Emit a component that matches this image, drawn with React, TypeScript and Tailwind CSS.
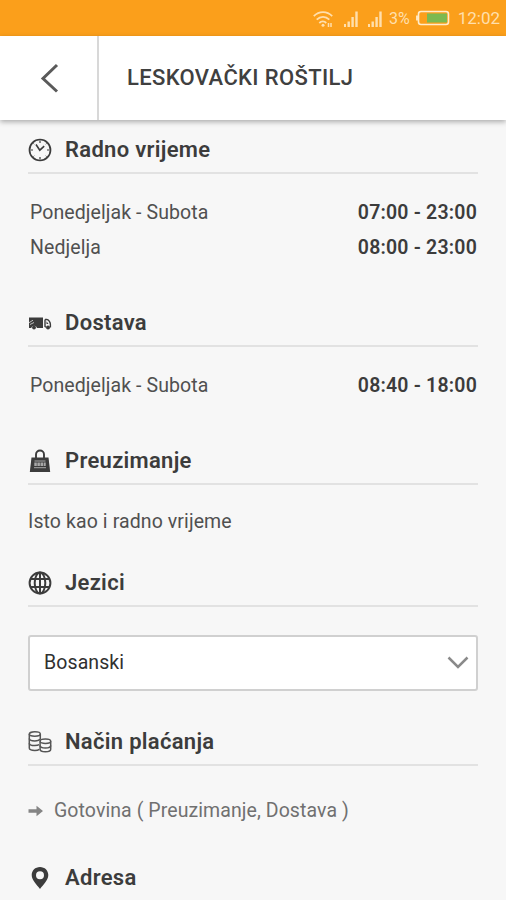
import React from 'react';

interface SectionProps {
  icon: React.ReactNode;
  title: string;
  children?: React.ReactNode;
}

interface HoursRowProps {
  days: string;
  hours: string;
}

const SignalIcon: React.FC = () => (
  <svg className="h-[18px] w-4" viewBox="0 0 16 18" fill="currentColor">
    <path d="M1 14h2v3H1zM4.500 11.500h2.400V17H4.500zM8.400 7h2.400v10H8.400zM12.300 1.500h2.400V17h-2.400z" />
  </svg>
);

const WifiIcon: React.FC = () => (
  <svg className="h-[18px] w-5" viewBox="0 0 20 18" fill="none" stroke="currentColor" strokeWidth="1.800">
    <path d="M.8 6.200C6 .8 14 .8 19.200 6.200M3.700 9.700c3.700-3.700 8.900-3.700 12.600 0M6.300 13c2-2 5-2 7 0" />
    <circle cx="10" cy="15.300" r="1.500" fill="currentColor" stroke="none" />
    <path d="M15.500 13v4M18 13v4" strokeWidth="1.500" />
  </svg>
);

const BatteryIcon: React.FC = () => (
  <svg className="h-4 w-[34px]" viewBox="0 0 34 16">
    <rect x="2.500" y="1.500" width="30" height="13" rx="2.500" fill="none" stroke="#ffeccb" strokeWidth="1.600" />
    <path d="M1 5.500v5" stroke="#ffeccb" strokeWidth="1.800" />
    <rect x="11" y="3.500" width="20" height="9" fill="#7cb950" />
  </svg>
);

const ClockIcon: React.FC = () => (
  <svg className="size-6" viewBox="0 0 24 24" fill="none" stroke="currentColor">
    <circle cx="12" cy="12" r="10.500" strokeWidth="1.700" />
    <path d="M8 6.500l3.800 5.700 4.400-4" strokeWidth="1.600" />
    <path d="M12 2.500v2.500M12 19v2.500M2.500 12H5M19 12h2.500" strokeWidth="1.200" />
    <path d="M5.300 5.300l1 1M17.700 17.700l1 1M5.300 18.700l1-1M18.700 5.300l-1 1" strokeWidth=".8" />
  </svg>
);

const TruckIcon: React.FC = () => (
  <svg className="size-6" viewBox="0 0 24 24" fill="currentColor">
    <path d="M1 6.500h14V17H9a3 3 0 0 0-5.800 0H1z" />
    <path d="M1 11.700l4-2.500M2 13.500l4-2" stroke="#f7f7f7" strokeWidth=".7" />
    <circle cx="6" cy="16.500" r="1.900" />
    <path d="M17 8.500h1.800c1.700 0 3.600 2.700 3.600 5v3M17 8.500v7l1 .8" fill="none" stroke="currentColor" strokeWidth="1.400" />
    <path d="M18.500 10.200l2 2.700h-2z" />
    <circle cx="20" cy="16.400" r="2" />
  </svg>
);

const BagIcon: React.FC = () => (
  <svg className="size-6" viewBox="0 0 24 24" fill="currentColor">
    <path d="M3.500 8.500h17l1.700 14.500H1.800z" />
    <path d="M8 9V5.500a4 4 0 0 1 8 0V9" fill="none" stroke="currentColor" strokeWidth="1.900" />
    <path d="M6.500 12h11M6 18.700h12" stroke="#a8a8a8" strokeWidth="1" />
    <path d="M6.300 15.300h11.400" stroke="#a8a8a8" strokeWidth="3.500" strokeDasharray="2.500 .6" />
  </svg>
);

const GlobeIcon: React.FC = () => (
  <svg className="size-6" viewBox="0 0 24 24" fill="none" stroke="currentColor" strokeWidth="2">
    <circle cx="12" cy="12" r="10.400" />
    <ellipse cx="12" cy="12" rx="5.300" ry="10.400" />
    <path d="M12 1.500v21M2.800 8h18.400M2.800 16h18.400" />
  </svg>
);

const CoinsIcon: React.FC = () => (
  <svg className="size-6" viewBox="0 0 24 24" fill="none" stroke="#555" strokeWidth="1.500">
    <ellipse cx="6.800" cy="4" rx="5.500" ry="2.200" />
    <path d="M1.300 4v14c0 1.400 2.400 2.400 5.500 2.400 1.900 0 3.600-.4 4.600-1.100M12.300 4v5.500" />
    <path d="M1.300 8.500c0 1.400 2.400 2.400 5.500 2.400 2.600 0 4.700-.7 5.300-1.700M1.300 13.200c0 1.400 2.400 2.400 5.500 2.400 1.700 0 3.400-.3 4.400-.9" />
    <ellipse cx="17.400" cy="11.200" rx="5.300" ry="2.200" />
    <path d="M12.100 11.200v8c0 1.400 2.300 2.500 5.300 2.500s5.300-1.100 5.300-2.500v-8" />
    <path d="M12.100 15.500c0 1.400 2.300 2.500 5.300 2.500s5.300-1.100 5.300-2.500" />
  </svg>
);

const PinIcon: React.FC = () => (
  <svg className="size-6" viewBox="0 0 24 24" fill="currentColor">
    <path fillRule="evenodd" d="M12 1C7.200 1 3.700 4.600 3.700 9c0 5.300 5 9.500 8.300 14 3.300-4.500 8.300-8.700 8.300-14 0-4.400-3.500-8-8.300-8zm0 4.200a4 4 0 1 1 0 8 4 4 0 0 1 0-8z" />
  </svg>
);

const Section: React.FC<SectionProps> = ({ icon, title, children }) => (
  <section>
    <div className="flex h-[49px] items-center gap-[13px] border-b-2 border-[#e2e2e2] pt-0.5 text-[#3c3c3c]">
      {icon}
      <h2 className="text-[22px] leading-none font-semibold tracking-[0.3px]">{title}</h2>
    </div>
    {children}
  </section>
);

const HoursRow: React.FC<HoursRowProps> = ({ days, hours }) => (
  <div className="flex h-[35px] items-center justify-between pr-px pl-0.5">
    <span className="text-[19.500px] tracking-[0.08px] text-[#505050]">{days}</span>
    <span className="text-[19.500px] font-semibold tracking-[0.2px] text-[#3c3c3c]">{hours}</span>
  </div>
);

const App: React.FC = () => {
  return (
    <div className="flex h-[900px] w-full flex-col overflow-hidden bg-[#f7f7f7] font-['Roboto',sans-serif]">
      <div className="flex h-9 shrink-0 items-center justify-end bg-[#fb9f1b] pt-0.5 pr-1.5 text-[#ffdfad]">
        <WifiIcon />
        <span className="ml-2.5 flex gap-2">
          <SignalIcon />
          <SignalIcon />
        </span>
        <span className="ml-1.5 text-base">3%</span>
        <span className="ml-1.5 -mt-0.5">
          <BatteryIcon />
        </span>
        <span className="ml-2 text-[17px]">12:02</span>
      </div>

      <header className="z-10 flex h-[84px] shrink-0 bg-white shadow-[0_2px_5px_rgba(0,0,0,0.3)]">
        <button className="flex w-[99px] items-center justify-center border-r-2 border-[#d8d8d8]" aria-label="Nazad">
          <svg className="h-[30px] w-5" viewBox="0 0 20 30" fill="none" stroke="#5a5a5a" strokeWidth="3">
            <path d="M18 2L4 15.500 18 28.500" />
          </svg>
        </button>
        <h1 className="flex items-center pb-0.5 pl-7 text-[22px] font-medium tracking-[0.35px] text-[#404040]">LESKOVAČKI ROŠTILJ</h1>
      </header>

      <main className="px-7 pt-[5px]">
        <Section icon={<ClockIcon />} title="Radno vrijeme">
          <div className="pt-[21px] pb-[33px]">
            <HoursRow days="Ponedjeljak - Subota" hours="07:00 - 23:00" />
            <HoursRow days="Nedjelja" hours="08:00 - 23:00" />
          </div>
        </Section>

        <Section icon={<TruckIcon />} title="Dostava">
          <div className="pt-[21px] pb-[33px]">
            <HoursRow days="Ponedjeljak - Subota" hours="08:40 - 18:00" />
          </div>
        </Section>

        <Section icon={<BagIcon />} title="Preuzimanje">
          <p className="flex h-[73px] items-center text-[19.500px] tracking-[0.1px] text-[#505050]">Isto kao i radno vrijeme</p>
        </Section>

        <Section icon={<GlobeIcon />} title="Jezici">
          <div className="pt-7 pb-[26px]">
            <button className="flex h-14 w-full items-center justify-between rounded-[3px] border-2 border-[#d0d0d0] bg-white pr-[7px] pl-3.5 text-[19.500px] tracking-[0.1px] text-[#303030]">
              Bosanski
              <svg className="h-3.5 w-[22px]" viewBox="0 0 22 14" fill="none" stroke="#8a8a8a" strokeWidth="2.500">
                <path d="M1.500 1.500L11 11l9.500-9.500" />
              </svg>
            </button>
          </div>
        </Section>

        <Section icon={<CoinsIcon />} title="Način plaćanja">
          <div className="flex h-[87px] items-center pt-0.5 text-[#707070]">
            <svg className="h-3 w-4" viewBox="0 0 16 12" fill="#858585">
              <path d="M.5 4.300h8V.8L15 6l-6.500 5.200V7.700h-8z" />
            </svg>
            <span className="ml-2.5 text-[19.500px] tracking-[0.08px]">Gotovina ( Preuzimanje, Dostava )</span>
          </div>
        </Section>

        <Section icon={<PinIcon />} title="Adresa" />
      </main>
    </div>
  );
};

export default App;
